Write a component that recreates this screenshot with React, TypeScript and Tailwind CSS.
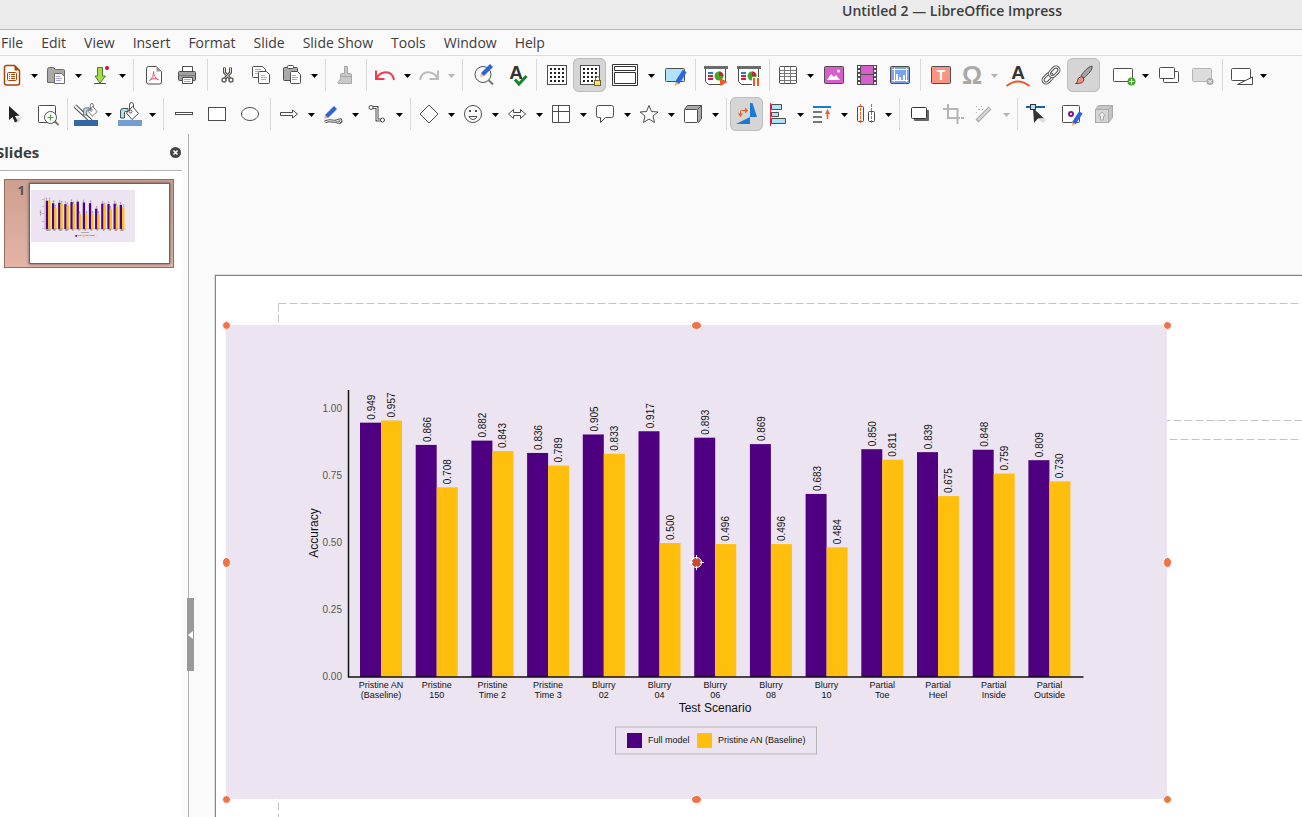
import React from 'react';

const menus = ['File', 'Edit', 'View', 'Insert', 'Format', 'Slide', 'Slide Show', 'Tools', 'Window', 'Help'];

// Accuracy per scenario: [label line 1, label line 2, full model, baseline]
const scenarios: [string, string, number, number][] = [
    ['Pristine AN', '(Baseline)', 0.949, 0.957],
    ['Pristine', '150', 0.866, 0.708],
    ['Pristine', 'Time 2', 0.882, 0.843],
    ['Pristine', 'Time 3', 0.836, 0.789],
    ['Blurry', '02', 0.905, 0.833],
    ['Blurry', '04', 0.917, 0.5],
    ['Blurry', '06', 0.893, 0.496],
    ['Blurry', '08', 0.869, 0.496],
    ['Blurry', '10', 0.683, 0.484],
    ['Partial', 'Toe', 0.85, 0.811],
    ['Partial', 'Heel', 0.839, 0.675],
    ['Partial', 'Inside', 0.848, 0.759],
    ['Partial', 'Outside', 0.809, 0.73],
];

const ink = '#4d4d4d';
const dots = [5, 9, 13, 17];

/* Shared icon parts */
const Pencil = ({ at }: { at: string }) => (
    <g transform={at}>
        <path d="M0 0l1-4 3 3z" fill="#f7b877" />
        <path d="M1-4l9-9 3 3-9 9z" fill="#2f63dd" />
    </g>
);

const DotGrid = () => (
    <>
        <rect x="3.5" y="2.5" width="19" height="19" fill="#fff" stroke={ink} />
        {dots.map(y => dots.map(x => <rect key={`${x}-${y}`} x={x + 1} y={y} width="2" height="2" fill="#222" />))}
    </>
);

const Board = () => (
    <>
        <path d="M2.5 5v13.5l3 3h14l3-3V5z" fill="#fff" stroke={ink} />
        <path d="M1 3h24v3H1z" fill="#6b6b6b" />
        <path d="M5 9h5v2H5z" fill="#1e7fd6" />
        <path d="M5 12h5v2H5zM5 15h5v2H5z" fill="#d02040" />
        <circle cx="16" cy="13" r="4.5" fill="#43a829" />
        <path d="M16 13V8.5a4.5 4.5 0 0 1 4.500 4.500z" fill="#d02040" />
    </>
);

const Bucket = () => (
    <>
        <path d="M3.5 16V9q0-2.500 2.500-2.500h5v3H8.500q-1 0-1 1V16z" fill="#aee3f7" stroke={ink} />
        <path d="M9.5 11l6-6.5 6 7-6.5 6z" fill="#fff" stroke={ink} />
        <path d="M12.5 9V3q0-2.500 2-2.500t2 2.500v3" fill="none" stroke={ink} />
        <circle cx="13.5" cy="9.5" r="1.500" fill="#fff" stroke={ink} />
    </>
);

const icons: Record<string, React.ReactNode> = {
    newDoc: (
        <>
            <path d="M7 2.5h8.5l5 5V20a2 2 0 0 1-2 2H7.5a2 2 0 0 1-2-2V4.5a2 2 0 0 1 2-2z" fill="#fff" stroke="#a8450b" strokeWidth="1.5" />
            <path d="M15.5 2.5l5 5h-5z" fill="#a8450b" />
            <rect x="8.5" y="9.5" width="9" height="8" rx="1" fill="none" stroke="#a8450b" />
            <path d="M10 11.5h1M12 11.5h4M10 13.5h1M12 13.5h4M10 15.5h1M12 15.5h4" stroke="#a8450b" />
        </>
    ),
    open: (
        <>
            <path d="M4.5 19.5v-13a2 2 0 0 1 2-2h4l2 2h8a1 1 0 0 1 1 1v12z" fill="#a9a9a9" stroke="#6b6b6b" />
            <path d="M11.5 10.5h7l3 3v7h-10z" fill="#fff" stroke="#6b6b6b" />
            <path d="M13 13.5h4M13 15.5h6M13 17.5h5" stroke="#a7a5e8" />
        </>
    ),
    save: (
        <>
            <path d="M10.5 4.5h5V13h3l-5.5 7L8 13h2.5z" fill="#a5dc4b" stroke="#58792a" />
            <path d="M7 20.5h12" stroke={ink} />
            <circle cx="20" cy="5" r="2" fill="#c8152e" />
        </>
    ),
    pdf: (
        <>
            <path d="M7.5 3.5h8l5 5V19a2 2 0 0 1-2 2h-11a2 2 0 0 1-2-2V5.5a2 2 0 0 1 2-2z" fill="#fff" stroke={ink} />
            <path d="M15.5 3.5l5 5h-5z" fill="#999" />
            <path d="M8.5 17.5c3-2 4-5 4-9 0 4 2 7 5 8.5M8.5 17.5c2-2 6-2.500 9-1" fill="none" stroke="#ea4f68" />
        </>
    ),
    print: (
        <>
            <path d="M8.5 3.5h10v6h-10z" fill="#fff" stroke={ink} />
            <rect x="4.5" y="8.5" width="17" height="9" rx="1" fill="#a0a0a0" stroke={ink} />
            <path d="M4.5 12.5h17" stroke="#777" />
            <path d="M8.5 14.5h10v6h-10z" fill="#fff" stroke={ink} />
            <path d="M10 16.5h7M10 18.5h7" stroke="#a7a5e8" />
        </>
    ),
    cut: (
        <>
            <path d="M9.5 4.5v5l5.5 6M15.5 4.5v5l-5.5 6" fill="none" stroke={ink} strokeWidth="3" />
            <path d="M9.5 5v4.500l5.500 6M15.5 5v4.500l-5.500 6" fill="none" stroke="#e5e1d8" />
            <circle cx="9" cy="17" r="2" fill="#fff" stroke="#67625a" strokeWidth="1.5" />
            <circle cx="16" cy="17" r="2" fill="#fff" stroke="#67625a" strokeWidth="1.5" />
        </>
    ),
    copy: (
        <>
            <path d="M5.5 3.5h9l3 3v8h-12q-1 0-1-1v-9q0-1 1-1z" fill="#fff" stroke={ink} />
            <path d="M7 6.5h6M7 8.5h4M7 10.5h3" stroke="#a7a5e8" />
            <path d="M11.5 8.5h7l3 3v8q0 1-1 1h-9q-1 0-1-1v-10q0-1 1-1z" fill="#fff" stroke={ink} />
            <path d="M13 12.5h4M13 14.5h6M13 16.5h5" stroke="#a7a5e8" />
        </>
    ),
    paste: (
        <>
            <rect x="4.5" y="4.5" width="14" height="13" rx="1" fill="#a9a9a9" stroke={ink} />
            <rect x="8.5" y="2.5" width="6" height="3" rx="1" fill="#fff" stroke={ink} />
            <path d="M12.5 8.5h6l3 3v8q0 1-1 1h-8q-1 0-1-1v-10q0-1 1-1z" fill="#fff" stroke={ink} />
            <path d="M13 12.5h4M13 14.5h6M13 16.5h5" stroke="#a7a5e8" />
        </>
    ),
    clone: (
        <path d="M11.5 3.5h3v7h3q1 0 1 1v9h-13q-2-1 0-2 2-1 2-4v-3q0-1 1-1h3zM8 13.5h10" fill="#c9c9c9" stroke="#a8a8a8" />
    ),
    undo: (
        <g fill="none" stroke="#ee3a50" strokeWidth="2">
            <path d="M4 7.5V16h8.5" />
            <path d="M4.5 15.5C8 8 20 6 22 17" />
        </g>
    ),
    redo: (
        <g fill="none" stroke="#bcbcbc" strokeWidth="2">
            <path d="M22 7.5V16h-8.5" />
            <path d="M21.5 15.5C18 8 6 6 4 17" />
        </g>
    ),
    find: (
        <>
            <circle cx="13" cy="11.5" r="8" fill="#fafafa" stroke={ink} />
            <path d="M18.5 17l4.5 4.5" stroke="#777" strokeWidth="2" />
            <Pencil at="translate(10 14)" />
        </>
    ),
    spell: (
        <>
            <text x="13" y="16" textAnchor="middle" fontSize="19" fontWeight="700" fill="#333">A</text>
            <path d="M12 16.5l4 4.5 7.5-8" fill="none" stroke="#16852a" strokeWidth="3" />
        </>
    ),
    grid: <DotGrid />,
    gridLock: (
        <>
            <DotGrid />
            <path d="M18.5 18v-2.500q0-2 2-2t2 2V18" fill="none" stroke="#6d6234" />
            <rect x="17.5" y="17.5" width="6" height="5" fill="#fce072" stroke="#6d6234" />
        </>
    ),
    display: (
        <g fill="#fff" stroke="#333">
            <path d="M4.5 1.5h25v21h-25z" />
            <path d="M6.5 3.5h21v4h-21zM6.5 9.5h21v11h-21z" />
        </g>
    ),
    editMaster: (
        <>
            <rect x="3.5" y="5.5" width="19" height="13" rx="1" fill="#b0e2f8" stroke={ink} />
            <Pencil at="translate(13 23) rotate(-12) scale(1.1)" />
        </>
    ),
    playFirst: (
        <>
            <Board />
            <path d="M17 15l7.5 4-7.5 4z" fill="#ee5a24" />
        </>
    ),
    playCurrent: (
        <>
            <Board />
            <path d="M16 14h9v10h-9z" fill="#fafafa" />
            <path d="M17 15h2v8h-2zM21 15h2v8h-2z" fill="#ee5a24" />
        </>
    ),
    table: (
        <>
            <rect x="4.5" y="3.5" width="17" height="17" rx="1" fill="#fff" stroke={ink} />
            <path d="M4.5 7.5h17M4.5 10.5h17M4.5 13.5h17M4.5 17.5h17M9.5 3.5v17M15.5 3.5v17" stroke="#777" />
        </>
    ),
    image: (
        <>
            <rect x="3.5" y="3.5" width="19" height="17" rx="1" fill="#d65fcb" stroke={ink} />
            <path d="M6 17l4-6 3 3 2-2 4 5z" fill="#fff" />
            <circle cx="17.5" cy="8" r="1.5" fill="#fff" />
        </>
    ),
    media: (
        <>
            <path d="M3 2h20v20H3z" fill={ink} />
            <path d="M7 3h12v8H7zM7 12h12v9H7z" fill="#d65fcb" />
            <path d="M5 3v18M21 3v18" stroke="#fff" strokeWidth="2" strokeDasharray="2 2" />
        </>
    ),
    chart: (
        <>
            <rect x="3.5" y="3.5" width="19" height="17" rx="1" fill="#7aa2f0" stroke={ink} />
            <path d="M5 6.5h16M5 17.5h16M7.5 5v14M19.5 5v14" stroke="#fff" />
            <path d="M10 17v-6M13 17v-3M17 17v-5" stroke="#fff" strokeWidth="2" />
        </>
    ),
    textBox: (
        <>
            <rect x="3.5" y="3.5" width="19" height="17" rx="1" fill="#fb9382" stroke={ink} />
            <text x="13" y="17" textAnchor="middle" fontSize="14" fontWeight="700" fill="#fff">T</text>
        </>
    ),
    omega: <text x="13" y="21" textAnchor="middle" fontSize="25" fontWeight="700" fill="#a9a9a9">Ω</text>,
    fontwork: (
        <>
            <text x="13" y="16" textAnchor="middle" fontSize="19" fontWeight="700" fill="#333">A</text>
            <path d="M1.5 23q11.5-9 23 0" fill="none" stroke="#ee5a24" strokeWidth="2" />
        </>
    ),
    link: (
        <g fill="none" transform="rotate(-45 13 12)">
            <rect x="3" y="9" width="11" height="6" rx="3" stroke={ink} strokeWidth="3" />
            <rect x="3" y="9" width="11" height="6" rx="3" stroke="#fff" />
            <rect x="12" y="9" width="11" height="6" rx="3" stroke={ink} strokeWidth="3" />
            <rect x="12" y="9" width="11" height="6" rx="3" stroke="#fff" />
        </g>
    ),
    draw: (
        <>
            <path d="M10 13c3-5 7-9 11-10 1 4-4 8-8 12z" fill="#a4a4a4" stroke={ink} />
            <path d="M4.5 20.5q2 0 2-3t4-4l2.5 2.5q0 5-8.5 4.5z" fill="#fb8b76" stroke={ink} />
        </>
    ),
    newSlide: (
        <>
            <rect x="11.5" y="5.5" width="19" height="13" rx="1" fill="#fff" stroke={ink} />
            <circle cx="29.5" cy="18.5" r="4" fill="#43a829" />
            <path d="M27 18.5h5M29.5 16v5" stroke="#fff" />
        </>
    ),
    dupSlide: (
        <g fill="#fff" stroke={ink}>
            <rect x="7.5" y="8.5" width="15" height="11" rx="1" />
            <rect x="3.5" y="4.5" width="15" height="11" rx="1" />
        </g>
    ),
    delSlide: (
        <>
            <rect x="3.5" y="5.5" width="19" height="13" rx="1" fill="#dcdcdc" stroke="#b5b5b5" />
            <circle cx="21" cy="18.5" r="3.5" fill="#a8a8a8" />
            <path d="M19.5 17l3 3M22.5 17l-3 3" stroke="#fff" />
        </>
    ),
    layout: (
        <g fill="#fff" stroke={ink}>
            <rect x="3.5" y="5.5" width="19" height="12" rx="1" />
            <path d="M9.5 21.5l15-7.5v7.500z" />
        </g>
    ),
    select: (
        <>
            <path d="M12 17l3 4 4-2 1-4z" fill="#d5d5d5" />
            <path d="M8 4v14l3.5-3 2.5 5.5 2.5-1.5-2.5-5 4.5-.5z" fill="#222" />
        </>
    ),
    zoom: (
        <>
            <rect x="4.5" y="3.5" width="17" height="17" rx="1" fill="#fff" stroke={ink} />
            <path d="M20.5 19l4 4" stroke="#777" strokeWidth="2" />
            <circle cx="16.5" cy="15.5" r="6" fill="#fff" stroke={ink} />
            <path d="M13.5 15.5h6M16.5 12.5v6" stroke="#43a829" />
        </>
    ),
    lineColor: (
        <>
            <path d="M2 4l16 15" stroke={ink} strokeWidth="4" />
            <path d="M2 4l16 15" stroke="#fff" strokeWidth="2" />
            <g transform="translate(8 1) scale(.75)"><Bucket /></g>
            <path d="M1 18h24v6H1z" fill="#3465a4" />
        </>
    ),
    fillColor: (
        <>
            <Bucket />
            <path d="M1 18h24v6H1z" fill="#729fcf" />
        </>
    ),
    line: <rect x="4.5" y="10.5" width="17" height="2" fill="#fff" stroke={ink} />,
    rect: <rect x="4.5" y="5.5" width="17" height="13" fill="#fff" stroke={ink} />,
    ellipse: <ellipse cx="13" cy="12" rx="8.5" ry="6.5" fill="#fff" stroke={ink} />,
    arrow: <path d="M4.5 10.5h12v-2.500l5 4-5 4v-2.500h-12z" fill="#fff" stroke={ink} />,
    curve: (
        <>
            <path d="M5 20q3-2 7-1t7-1q2-1 2 1t-4 1" fill="none" stroke={ink} strokeWidth="3" />
            <path d="M5 20q3-2 7-1t7-1q2-1 2 1t-4 1" fill="none" stroke="#fff" />
            <Pencil at="translate(4 17)" />
        </>
    ),
    connector: (
        <g fill="none" stroke={ink}>
            <path d="M7 5.500h6V18h5" strokeWidth="3" />
            <path d="M7 5.500h6V18h5" stroke="#fff" />
            <circle cx="7" cy="5.5" r="2" fill="#fff" />
            <circle cx="18.5" cy="18" r="2" fill="#fff" />
        </g>
    ),
    diamond: <path d="M13 3l9 9-9 9-9-9z" fill="#fff" stroke={ink} />,
    smiley: (
        <g fill="#fff" stroke={ink}>
            <circle cx="13" cy="12" r="8.5" />
            <path d="M9 14.5h8q-1 3-4 3t-4-3z" />
            <path d="M10 8v2M16 8v2" strokeWidth="2" />
        </g>
    ),
    blockArrow: <path d="M4.5 12l5-4.500v3h7v-3l5 4.500-5 4.500v-3h-7v3z" fill="#fff" stroke={ink} />,
    flowchart: (
        <g fill="#fff" stroke={ink}>
            <path d="M4.5 3.5h17v17h-17zM10.5 3.5v17M4.5 9.5h17" />
        </g>
    ),
    callout: <path d="M6.5 3.5h13q2 0 2 2v8q0 2-2 2h-6l-5 5v-5h-2q-2 0-2-2v-8q0-2 2-2z" fill="#fff" stroke={ink} />,
    star: <path d="M13 3.5l2.5 6 6.5.5-5 4 1.5 6.5-5.5-3.5-5.5 3.5L9 14l-5-4 6.5-.5z" fill="#fff" stroke={ink} />,
    cube: (
        <g stroke={ink}>
            <path d="M4.5 7.5l3-4h14v13l-3 4z" fill="#aaa" />
            <rect x="4.5" y="7.5" width="13" height="13" rx="1" fill="#fff" />
            <path d="M17.5 7.5l4-4" />
        </g>
    ),
    rotate: (
        <>
            <path d="M16 1h2.500L23 15h-7zM2 22h14v-7z" fill="#1a7ad4" />
            <path d="M6.500 13V9.500q0-1 1-1H12" fill="none" stroke="#ee5a24" />
            <path d="M4 11.500h5L6.500 15zM11 5.500l3 3-3 3z" fill="#ee5a24" />
        </>
    ),
    align: (
        <>
            <path d="M6.5 2.5h10v5h-10zM6.5 10.5h7v4h-7zM6.5 16.5h14v5h-14z" fill="#b0e2f8" stroke={ink} />
            <path d="M5.5 1v23" stroke="#e3203f" />
        </>
    ),
    arrange: (
        <>
            <path d="M4 4h18v2H4z" fill="#1a7ad4" />
            <path d="M4 9h9v2H4zM4 14h9v2H4zM4 19h9v2H4z" fill="#777" />
            <path d="M18.5 17v-7" stroke="#ee5a24" strokeWidth="1.5" />
            <path d="M16 12l2.5-5 2.5 5z" fill="#ee5a24" />
        </>
    ),
    distribute: (
        <>
            <rect x="4.5" y="4.5" width="6" height="15" rx="1" fill="#fff" stroke={ink} />
            <rect x="15.5" y="9.5" width="6" height="10" rx="1" fill="#fff" stroke={ink} />
            <path d="M7.5 2v20M18.5 2v20" stroke="#ee5a24" strokeDasharray="3 1" />
        </>
    ),
    shadow: (
        <>
            <rect x="7" y="8" width="15" height="11" rx="1" fill="#666" />
            <rect x="4.5" y="5.5" width="15" height="11" rx="1" fill="#fff" stroke="#333" />
        </>
    ),
    crop: <path d="M3 7h14.5V20M8 2v14h12M21 16h3M17.5 18v4" fill="none" stroke="#b5b5b5" strokeWidth="2" />,
    effect: (
        <>
            <path d="M6 19L19 6" stroke="#a8a8a8" strokeWidth="4" />
            <path d="M7 18L18.5 6.5" stroke="#d8d8d8" strokeWidth="2" />
            <path d="M5 4.500h1M10 4.500h1M7 7.500h2M5 10.500h1M11 7.500h1" stroke="#b5b5b5" />
        </>
    ),
    points: (
        <>
            <path d="M1 5h19" stroke="#1263a3" strokeWidth="2" />
            <path d="M14 17l3 4 4-2-2-4z" fill="#ddd" />
            <path d="M8 6l10.5 10-5.5.5L9 21z" fill="#333" />
            <rect x="5.5" y="2.5" width="5" height="5" fill="#b0e2f8" stroke="#333" />
        </>
    ),
    glue: (
        <>
            <rect x="4.5" y="3.5" width="17" height="17" rx="1" fill="#fff" stroke={ink} />
            <circle cx="13" cy="12" r="2" fill="#fff" stroke="#7a1d79" strokeWidth="2" />
            <Pencil at="translate(14 24) rotate(-12)" />
        </>
    ),
    extrude: (
        <g stroke="#a9a9a9">
            <path d="M4.5 7.5l3-4h14v12l-4 5z" fill="#c4c4c4" />
            <rect x="4.5" y="7.5" width="13" height="13" fill="#d6d6d6" />
            <path d="M17.5 7.5l4-4M9.5 18v-4h-2l3.500-4 3.500 4h-2v4z" fill="#eee" />
        </g>
    ),
};

type Tool = { icon: string; label: string; menu?: boolean; wide?: boolean; on?: boolean; off?: boolean };

// Every inner list is one group, with a separator between groups
const standardBar: Tool[][] = [
    [{ icon: 'newDoc', label: 'New', menu: true }, { icon: 'open', label: 'Open', menu: true }, { icon: 'save', label: 'Save', menu: true }],
    [{ icon: 'pdf', label: 'Export as PDF' }, { icon: 'print', label: 'Print' }],
    [{ icon: 'cut', label: 'Cut' }, { icon: 'copy', label: 'Copy' }, { icon: 'paste', label: 'Paste', menu: true }],
    [{ icon: 'clone', label: 'Clone Formatting', off: true }],
    [{ icon: 'undo', label: 'Undo', menu: true }, { icon: 'redo', label: 'Redo', menu: true, off: true }],
    [{ icon: 'find', label: 'Find & Replace' }, { icon: 'spell', label: 'Spelling' }],
    [
        { icon: 'grid', label: 'Display Grid' },
        { icon: 'gridLock', label: 'Snap to Grid', on: true },
        { icon: 'display', label: 'Display Views', menu: true, wide: true },
        { icon: 'editMaster', label: 'Master Slide' },
    ],
    [{ icon: 'playFirst', label: 'Start from First Slide' }, { icon: 'playCurrent', label: 'Start from Current Slide' }],
    [
        { icon: 'table', label: 'Insert Table', menu: true },
        { icon: 'image', label: 'Insert Image' },
        { icon: 'media', label: 'Insert Audio or Video' },
        { icon: 'chart', label: 'Insert Chart' },
    ],
    [
        { icon: 'textBox', label: 'Insert Text Box' },
        { icon: 'omega', label: 'Insert Special Character', menu: true, off: true },
        { icon: 'fontwork', label: 'Insert Fontwork' },
        { icon: 'link', label: 'Insert Hyperlink' },
        { icon: 'draw', label: 'Show Draw Functions', on: true },
        { icon: 'newSlide', label: 'New Slide', menu: true, wide: true },
        { icon: 'dupSlide', label: 'Duplicate Slide' },
        { icon: 'delSlide', label: 'Delete Slide', off: true },
    ],
    [{ icon: 'layout', label: 'Slide Layout', menu: true }],
];

const drawingBar: Tool[][] = [
    [{ icon: 'select', label: 'Select' }, { icon: 'zoom', label: 'Zoom & Pan' }],
    [{ icon: 'lineColor', label: 'Line Color', menu: true }, { icon: 'fillColor', label: 'Fill Color', menu: true }],
    [{ icon: 'line', label: 'Insert Line' }, { icon: 'rect', label: 'Rectangle' }, { icon: 'ellipse', label: 'Ellipse' }],
    [
        { icon: 'arrow', label: 'Lines and Arrows', menu: true },
        { icon: 'curve', label: 'Curves and Polygons', menu: true },
        { icon: 'connector', label: 'Connectors', menu: true },
    ],
    [
        { icon: 'diamond', label: 'Basic Shapes', menu: true },
        { icon: 'smiley', label: 'Symbol Shapes', menu: true },
        { icon: 'blockArrow', label: 'Block Arrows', menu: true },
        { icon: 'flowchart', label: 'Flowchart', menu: true },
        { icon: 'callout', label: 'Callouts', menu: true },
        { icon: 'star', label: 'Stars and Banners', menu: true },
        { icon: 'cube', label: '3D Objects', menu: true },
    ],
    [
        { icon: 'rotate', label: 'Rotate', on: true },
        { icon: 'align', label: 'Align', menu: true },
        { icon: 'arrange', label: 'Arrange', menu: true },
        { icon: 'distribute', label: 'Distribute', menu: true },
    ],
    [
        { icon: 'shadow', label: 'Shadow' },
        { icon: 'crop', label: 'Crop Image', off: true },
        { icon: 'effect', label: 'Filter', menu: true, off: true },
    ],
    [
        { icon: 'points', label: 'Toggle Point Edit Mode' },
        { icon: 'glue', label: 'Show Gluepoint Functions' },
        { icon: 'extrude', label: 'Toggle Extrusion', off: true },
    ],
];

const ToolItem: React.FC<{ tool: Tool }> = ({ tool }) => {
    const width = tool.wide ? 33 : 25;
    const drawing = (
        <svg width={width} height="24" viewBox={`0 0 ${width} 24`} className="overflow-visible font-['Liberation_Sans',sans-serif]">
            {icons[tool.icon]}
        </svg>
    );

    if (tool.menu) {
        return (
            <div className="flex shrink-0 items-center">
                <button aria-label={tool.label} disabled={tool.off} className="px-0.5 h-[34px]">{drawing}</button>
                <button aria-label={`${tool.label} options`} disabled={tool.off} className="flex w-[15px] h-[34px] items-center justify-center pl-0.5">
                    <svg width="7" height="4" viewBox="0 0 7 4" className="mt-0.5">
                        <path d="M0 0h7L3.5 4z" fill={tool.off ? '#b5b5b5' : '#000'} />
                    </svg>
                </button>
            </div>
        );
    }

    return (
        <button
            aria-label={tool.label}
            aria-pressed={tool.on}
            disabled={tool.off}
            className={
                tool.on
                    ? 'flex shrink-0 w-[33px] h-[34px] items-center justify-center rounded-md bg-[#d5d5d5] outline outline-1 -outline-offset-1 outline-[#bdbdbd]'
                    : 'flex shrink-0 w-[33px] h-[34px] items-center justify-center'
            }
        >
            {drawing}
        </button>
    );
};

const Toolbar: React.FC<{ groups: Tool[][]; label: string }> = ({ groups, label }) => (
    <div role="toolbar" aria-label={label} className="-ml-[3px] flex items-center">
        {groups.map((group, i) => (
            <React.Fragment key={i}>
                {i > 0 && <div className="ml-1 mr-[3px] h-8 w-px shrink-0 bg-[#dadada]" />}
                <div className="flex">
                    {group.map(tool => <ToolItem key={tool.icon} tool={tool} />)}
                </div>
            </React.Fragment>
        ))}
    </div>
);

const BAR = 21;
const STEP = 55.7;
const BASE = 352;
const UNIT = 268;

const AccuracyChart: React.FC<{ className: string }> = ({ className }) => (
    <svg viewBox="0 0 941 474" className={className} role="img" aria-label="Accuracy by test scenario" fontFamily="'Liberation Sans', Arial, sans-serif">
        <rect width="941" height="474" fill="#ece5f1" />
        {[0, 0.25, 0.5, 0.75, 1].map(v => (
            <text key={v} x="116" y={BASE - v * UNIT + 3} textAnchor="end" fontSize="10" fill="#555">{v.toFixed(2)}</text>
        ))}
        {scenarios.map(([top, bottom, full, base], i) => {
            const mid = 155 + i * STEP;
            return (
                <g key={i} fontSize="9" fill="#111" textAnchor="middle">
                    <rect x={mid - BAR} y={BASE - full * UNIT} width={BAR} height={full * UNIT} fill="#4f0080" />
                    <rect x={mid} y={BASE - base * UNIT} width={BAR} height={base * UNIT} fill="#ffbf0c" />
                    <text transform={`translate(${mid - 6} ${BASE - full * UNIT - 3}) rotate(-90)`} textAnchor="start" fontSize="10">{full.toFixed(3)}</text>
                    <text transform={`translate(${mid + 14} ${BASE - base * UNIT - 3}) rotate(-90)`} textAnchor="start" fontSize="10">{base.toFixed(3)}</text>
                    <text x={mid} y="363">{top}</text>
                    <text x={mid} y="373">{bottom}</text>
                </g>
            );
        })}
        <path d="M122.5 65v287h735" fill="none" stroke="#111" strokeWidth="1.5" />
        <text x="489" y="387" textAnchor="middle" fontSize="12" fill="#111">Test Scenario</text>
        <text transform="translate(92 208) rotate(-90)" textAnchor="middle" fontSize="12" fill="#111">Accuracy</text>
        <rect x="389.5" y="402" width="201" height="27" fill="none" stroke="#b5b5b5" />
        <rect x="401" y="408" width="15" height="15" fill="#4f0080" />
        <text x="422" y="418" fontSize="9" fill="#111">Full model</text>
        <rect x="471" y="408" width="15" height="15" fill="#ffbf0c" />
        <text x="492" y="418" fontSize="9" fill="#111">Pristine AN (Baseline)</text>
    </svg>
);

// Selection marks: centre and radii in the chart's own pixels
const handles = [
    [0, 0, 4, 4], [470, 0, 5, 4], [941, 0, 4, 4],
    [0, 237, 4, 5], [941, 237, 4, 5],
    [0, 474, 4, 4], [470, 474, 5, 4], [941, 474, 4, 4],
];

const App: React.FC = () => {
    return (
        <div className="flex h-screen flex-col overflow-hidden bg-[#fafafa] font-['Open_Sans',sans-serif] text-sm text-[#3d3d3d]">
            <header className="flex h-[30px] shrink-0 justify-center border-b border-[#b8b8b8] bg-[#ebebeb] pl-[602px]">
                <h1 className="whitespace-nowrap font-semibold leading-[22px]">Untitled 2 — LibreOffice Impress</h1>
            </header>

            <nav className="flex h-[26px] shrink-0 items-center border-b border-[#dcdcdc]">
                <div className="-ml-2 flex">
                    {menus.map(name => <button key={name} className="px-[9px] whitespace-nowrap">{name}</button>)}
                </div>
            </nav>

            <div className="flex h-[38px] shrink-0 items-center">
                <Toolbar groups={standardBar} label="Standard" />
            </div>
            <div className="flex h-10 shrink-0 items-center">
                <Toolbar groups={drawingBar} label="Drawing" />
            </div>

            <div className="flex min-h-0 flex-1">
                {/* Slide panel */}
                <aside className="mr-1.5 flex w-[182px] shrink-0 flex-col">
                    <div className="flex h-[37px] shrink-0 items-center justify-between border-b border-[#b3b3b3] pt-px pr-px">
                        <h2 className="-ml-1 text-[15px] font-bold">Slides</h2>
                        <button aria-label="Close Sidebar Deck">
                            <svg width="11" height="11" viewBox="0 0 11 11">
                                <circle cx="5.5" cy="5.5" r="5.5" fill="#444" />
                                <path d="M3.5 3.5l4 4M7.5 3.5l-4 4" stroke="#fff" strokeWidth="1.5" />
                            </svg>
                        </button>
                    </div>
                    <div className="flex-1 bg-white px-1 py-2">
                        <div className="flex h-[89px] w-[170px] justify-end border border-[#9b6b5c] bg-linear-to-b from-[#cd9f8f] to-[#e4b5a7] p-[3px]">
                            <span className="mr-1 text-[13px] font-bold leading-[14px] text-[#555]">1</span>
                            <div className="h-[81px] w-[141px] border border-[#666] bg-white pt-1.5 pl-px shadow-[0_0_3px_#555]">
                                <AccuracyChart className="w-[104px]" />
                            </div>
                        </div>
                    </div>
                </aside>

                {/* Splitter */}
                <div className="relative w-px shrink-0 bg-[#b0b0b0]">
                    <button aria-label="Hide slide panel" className="absolute top-[68%] -left-px flex h-[73px] w-[7px] items-center justify-center bg-[#999]">
                        <svg width="5" height="8" viewBox="0 0 5 8">
                            <path d="M5 0v8L0 4z" fill="#fff" />
                        </svg>
                    </button>
                </div>

                {/* Editing area */}
                <main className="flex min-w-0 flex-1 pt-[141px] pl-[26px]">
                    <div className="relative flex-1 overflow-hidden border-t border-l border-[#858585] bg-white outline outline-1 outline-[#dedede]">
                        {/* Placeholder outlines */}
                        <svg className="absolute top-0 left-0 h-full w-full" fill="none" stroke="#c4c4c4" strokeDasharray="8 3">
                            <path d="M62.5 27.5H2000M62.5 27.5v117H2000M62.5 163.5H2000M62.5 163.5V1200" />
                        </svg>
                        <div className="absolute top-[49px] left-[10px]">
                            <AccuracyChart className="w-[941px] max-w-none" />
                            <svg width="941" height="474" viewBox="0 0 941 474" className="absolute top-0 left-0 overflow-visible">
                                {handles.map(([cx, cy, rx, ry], i) => (
                                    <ellipse key={i} cx={cx + 0.5} cy={cy + 0.5} rx={rx} ry={ry} fill="#ef7346" stroke="#fff" />
                                ))}
                                <circle cx="470.5" cy="237.5" r="5" fill="#d0452f" stroke="#fff" />
                                <path d="M463 237.5h4M474 237.5h4M470.5 230v4M470.5 241v4" stroke="#fff" />
                            </svg>
                        </div>
                    </div>
                </main>
            </div>
        </div>
    );
};

export default App;
